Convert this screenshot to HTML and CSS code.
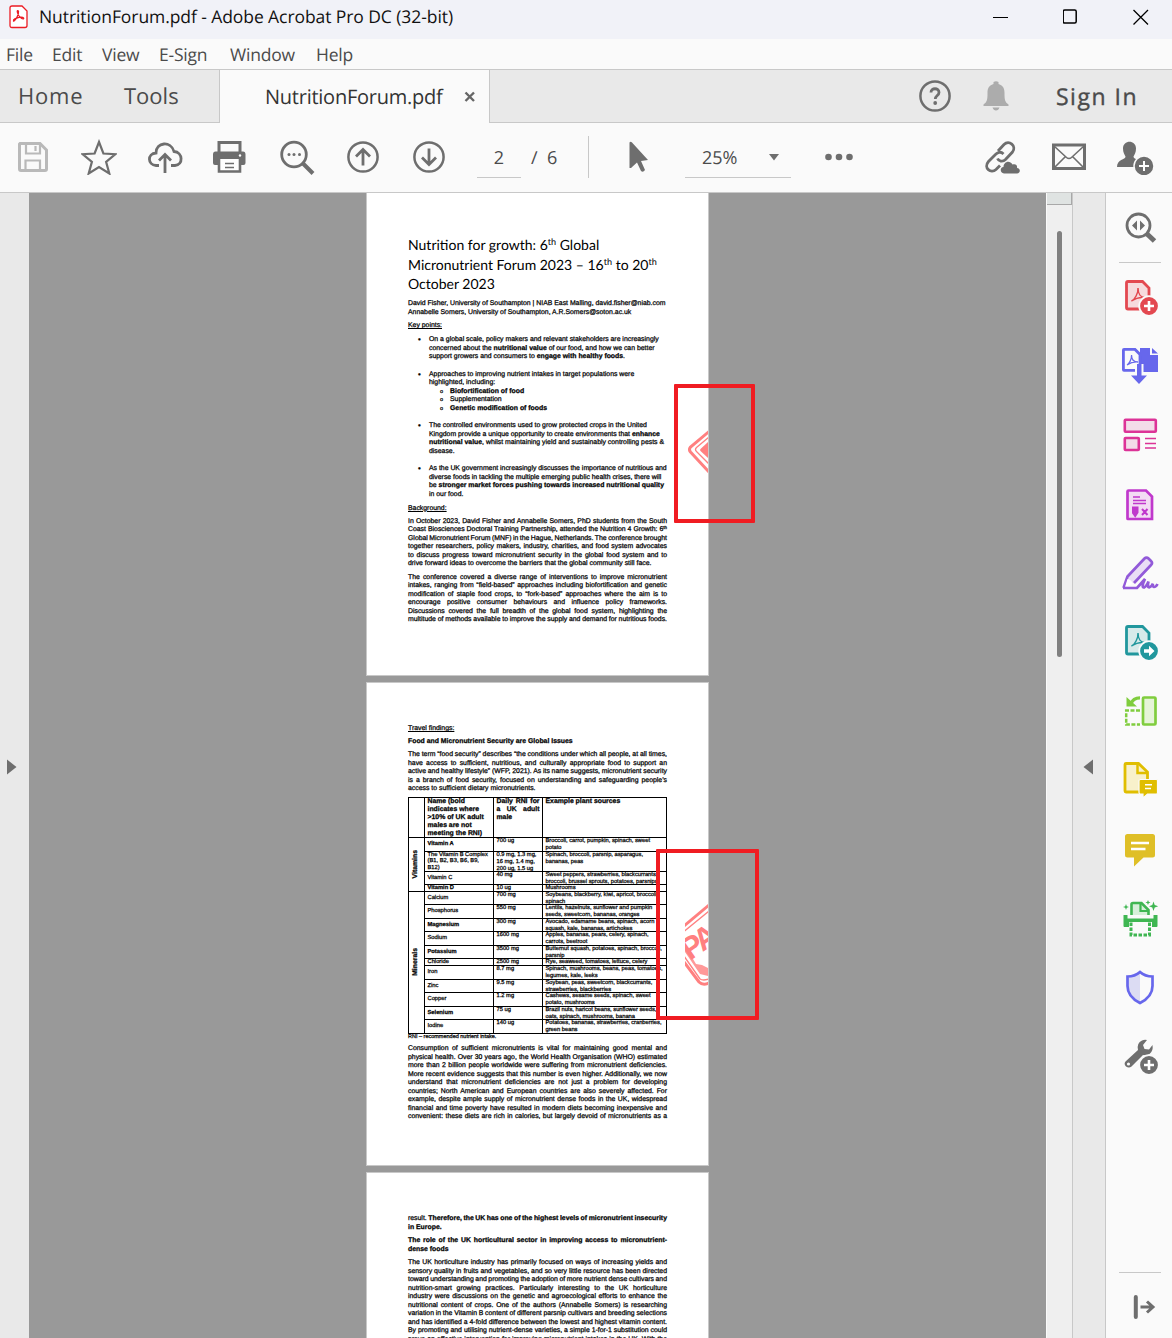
FILE: index.html
```html
<!DOCTYPE html>
<html lang="en">
<head>
    <meta charset="UTF-8">
    <meta name="viewport" content="width=device-width, initial-scale=1.0">
    <title>NutritionForum.pdf - Adobe Acrobat Pro DC (32-bit)</title>
    <link rel="stylesheet" href="styles.css">
</head>
<body>
    <!-- Title bar -->
    <header class="titlebar">
        <svg class="app-icon" width="20" height="24" viewBox="0 0 20 24"><path d="M3 1h10l5 5v14.500q0 2-2 2H3q-2 0-2-2V3q0-2 2-2z" fill="#fff" stroke="#ec1c24" stroke-width="1.300"/><path d="M4.500 16c2 0 5.500-7 5-9.500-.4-1.500-1.500-.8-1.200.5.7 4 4.500 7.500 6.200 6.800 1-1-1.500-2.300-5-1.300-2.500.6-5.500 2-5 3.500z" fill="none" stroke="#ec1c24" stroke-width="1.300"/></svg>
        <span class="title-text">NutritionForum.pdf - Adobe Acrobat Pro DC (32-bit)</span>
        <div class="window-buttons">
            <svg width="16" height="16" viewBox="0 0 16 16"><path d="M0 8.500h15" stroke="#000"/></svg>
            <svg width="16" height="16" viewBox="0 0 16 16"><rect x=".2" y="1" width="13" height="13" rx="1.500" fill="none" stroke="#000" stroke-width="1.500"/></svg>
            <svg width="16" height="16" viewBox="0 0 16 16"><path d="M.5 1l14.500 14.500M15 1L.5 15.500" stroke="#000" stroke-width="1.300"/></svg>
        </div>
    </header>

    <nav class="menubar">
        <span class="m-file">File</span>
        <span class="m-edit">Edit</span>
        <span class="m-view">View</span>
        <span class="m-sign">E-Sign</span>
        <span class="m-window">Window</span>
        <span class="m-help">Help</span>
    </nav>

    <!-- Tabs -->
    <div class="tabs">
        <div class="tabs-left">
            <span class="tab-home">Home</span>
            <span class="tab-tools">Tools</span>
        </div>
        <div class="tab-active">
            <span class="tab-name">NutritionForum.pdf</span>
            <svg width="12" height="12" viewBox="0 0 12 12"><path d="M1.500 1.500l8.500 8.500M10 1.500L1.500 10" stroke="#666" stroke-width="2.400"/></svg>
        </div>
        <div class="tabs-right">
            <svg class="help" width="32" height="32" viewBox="0 0 32 32"><circle cx="16" cy="16" r="14.600" fill="none" stroke="#6e6e6e" stroke-width="2.500"/><path d="M12 12.500c0-5 8-5 8 0 0 3-3.700 3-3.700 6.500" fill="none" stroke="#6e6e6e" stroke-width="2.800"/><circle cx="16.200" cy="23" r="1.900" fill="#6e6e6e"/></svg>
            <svg class="bell" width="26" height="30" viewBox="0 0 26 30"><path d="M10.500 3V1q2.500-1.500 5 0v2c5 1.500 6 5 6 9 0 7 .5 9 4 11.500V25H.5v-1.500C4 21 4.500 19 4.500 12c0-4 1-7.500 6-9zM9.500 26.500h7q-1 3-3.500 3t-3.500-3z" fill="#acacac"/></svg>
            <span class="signin">Sign In</span>
        </div>
    </div>

    <!-- Toolbar -->
    <div class="toolbar">
        <div class="slot"><svg width="36" height="36" viewBox="0 0 36 36"><path d="M5 4.500h20l6.500 6.500v19q0 1.500-1.500 1.500H6q-1.500 0-1.500-1.500V5z" fill="none" stroke="#b9b9b9" stroke-width="3"/><path d="M11 4v10.500h14V4M20.500 7v5M10.500 31V21.500h14.500V31" fill="none" stroke="#b9b9b9" stroke-width="2.200"/></svg></div>
        <div class="slot"><svg width="36" height="36" viewBox="0 0 36 36"><path d="M18 3l4.400 11.500 12 .7-9.300 7.600 3.200 11.700L18 28 7.700 34.500l3.200-11.700L1.600 15.200l12-.7z" fill="none" stroke="#6e6e6e" stroke-width="2.200"/></svg></div>
        <div class="slot"><svg width="36" height="36" viewBox="0 0 36 36"><path d="M12 26.500H9C.5 26 0 14.500 9 14 9 3 24 1.500 27 12.500c9 .5 9.500 13.500 1 14h-4" fill="none" stroke="#6e6e6e" stroke-width="2.800"/><path d="M18 34V16M12 21.500l6-6 6 6" fill="none" stroke="#6e6e6e" stroke-width="2.800"/></svg></div>
        <div class="slot print"><svg width="36" height="36" viewBox="0 0 36 36"><path d="M8 13V3.500h21V13" fill="none" stroke="#6e6e6e" stroke-width="3"/><path d="M4.500 12.500h27.500q2.500 0 2.500 3v8.500q0 2-2 2h-4V20H8v6H4q-2 0-2-2v-8.500q0-3 2.500-3z" fill="#6e6e6e"/><circle cx="29" cy="16.500" r="1.200" fill="#fff"/><path d="M8 20v12.500h21V20" fill="#fff" stroke="#6e6e6e" stroke-width="2.600"/><path d="M14 24.500h9M14 28.500h9" stroke="#6e6e6e" stroke-width="1.500"/></svg></div>
        <div class="slot"><svg width="36" height="36" viewBox="0 0 36 36"><circle cx="15" cy="15.500" r="12.300" fill="none" stroke="#6e6e6e" stroke-width="2.800"/><path d="M24 24.500l10 10" stroke="#6e6e6e" stroke-width="4"/><g fill="#6e6e6e"><circle cx="10" cy="15.500" r="1.500"/><circle cx="15" cy="15.500" r="1.500"/><circle cx="20.500" cy="15.500" r="1.500"/></g></svg></div>
        <div class="slot"><svg width="36" height="36" viewBox="0 0 36 36"><circle cx="18" cy="18" r="14.600" fill="none" stroke="#6e6e6e" stroke-width="2.500"/><path d="M18 26.500V11M11 17.500l7-7 7 7" fill="none" stroke="#6e6e6e" stroke-width="2.800"/></svg></div>
        <div class="slot"><svg width="36" height="36" viewBox="0 0 36 36"><circle cx="18" cy="18" r="14.600" fill="none" stroke="#6e6e6e" stroke-width="2.500"/><path d="M18 9.500V25M11 18.500l7 7 7-7" fill="none" stroke="#6e6e6e" stroke-width="2.800"/></svg></div>
        <div class="page-input">2</div>
        <div class="page-total">/&nbsp; 6</div>
        <div class="divider"></div>
        <svg class="cursor" width="20" height="32" viewBox="0 0 20 32"><path d="M.5 1.500q1-1.500 2.500 0L19 19l-7 1 4 9q-2 3-4 1l-4-8.500L2 27H.5z" fill="#6e6e6e"/></svg>
        <div class="zoom-box"><span>25%</span><svg width="10" height="7" viewBox="0 0 10 7"><path d="M0 0h10L5 6.500z" fill="#6e6e6e"/></svg></div>
        <svg class="dots" width="28" height="8" viewBox="0 0 28 8"><g fill="#6e6e6e"><circle cx="3.500" cy="4" r="3.300"/><circle cx="14" cy="4" r="3.300"/><circle cx="24.500" cy="4" r="3.300"/></g></svg>
        <div class="toolbar-right">
            <svg class="share-link" width="36" height="36" viewBox="0 0 36 36"><g fill="none" stroke="#6e6e6e" stroke-width="2.800"><path d="M14 12l6-6.500c5-5 13 1.500 8.500 7.500l-7 7.500c-3 3-7 1.500-8-1"/><path d="M19.500 15c-3-3-6-1.500-7.500 0L4.500 22.500C-1 29 7 35 12 30.500l4-4"/></g><path d="M20 34.500c-4-.5-4.500-6-.5-6.500 0-5 6-7.500 9-2.500 3.500-1 5 1 4.500 3.500 4 .5 3.500 5.500 0 5.500z" fill="#6e6e6e"/></svg>
            <svg width="36" height="36" viewBox="0 0 36 36"><rect x="2.500" y="6" width="31" height="23.500" fill="none" stroke="#6e6e6e" stroke-width="3"/><path d="M3 7l12.500 11.500q2.500 2 5 0L33 7M3 29l11-11M33 29L22 18" fill="none" stroke="#6e6e6e" stroke-width="1.600"/></svg>
            <svg width="38" height="36" viewBox="0 0 38 36"><path d="M7 9.500c0-9 13-9 13 0 0 4-1.500 6-2.500 8 0 3 6 3 6.500 5l-5 5.500H1c0-8 8.500-7 8.500-10.500C8.500 15.500 7 13.500 7 9.500z" fill="#6e6e6e"/><circle cx="28" cy="27" r="10" fill="#6e6e6e" stroke="#fafafa" stroke-width="1.500"/><path d="M28 22v10M23 27h10" stroke="#fff" stroke-width="2"/></svg>
        </div>
    </div>

    <main class="workspace">
        <div class="left-rail"><svg width="10" height="16" viewBox="0 0 10 16"><path d="M0 .5v15L9.500 8z" fill="#6e6e6e"/></svg></div>

        <div class="viewer">
            <!-- Page 1 -->
            <section class="page first">
                <h1>Nutrition for growth: 6<sup>th</sup> Global<br>Micronutrient Forum 2023 – 16<sup>th</sup> to 20<sup>th</sup><br>October 2023</h1>
                <p class="authors">David Fisher, University of Southampton | NIAB East Malling, david.fisher@niab.com<br>Annabelle Somers, University of Southampton, A.R.Somers@soton.ac.uk</p>
                <h3 class="key">Key points:</h3>
                <ul>
                    <li>On a global scale, policy makers and relevant stakeholders are increasingly<br>concerned about the <b>nutritional value</b> of our food, and how we can better<br>support growers and consumers to <b>engage with healthy foods</b>.</li>
                    <li>Approaches to improving nutrient intakes in target populations were<br>highlighted, including:
                        <ul class="sub">
                            <li><b>Biofortification of food</b></li>
                            <li>Supplementation</li>
                            <li><b>Genetic modification of foods</b></li>
                        </ul>
                    </li>
                    <li>The controlled environments used to grow protected crops in the United<br>Kingdom provide a unique opportunity to create environments that <b>enhance<br>nutritional value</b>, whilst maintaining yield and sustainably controlling pests &amp;<br>disease.</li>
                    <li>As the UK government increasingly discusses the importance of nutritious and<br>diverse foods in tackling the multiple emerging public health crises, there will<br>be <b>stronger market forces pushing towards increased nutritional quality</b><br>in our food.</li>
                </ul>
                <h3 class="background">Background:</h3>
                <p class="just">In October 2023, David Fisher and Annabelle Somers, PhD students from the South<br>Coast Biosciences Doctoral Training Partnership, attended the Nutrition 4 Growth: 6<sup>th</sup><br>Global Micronutrient Forum (MNF) in the Hague, Netherlands. The conference brought<br>together researchers, policy makers, industry, charities, and food system advocates<br>to discuss progress toward micronutrient security in the global food system and to<span class="last">drive forward ideas to overcome the barriers that the global community still face.</span></p>
                <p class="just">The conference covered a diverse range of interventions to improve micronutrient<br>intakes, ranging from “field-based” approaches including biofortification and genetic<br>modification of staple food crops, to “fork-based” approaches where the aim is to<br>encourage positive consumer behaviours and influence policy frameworks.<br>Discussions covered the full breadth of the global food system, highlighting the<br>multitude of methods available to improve the supply and demand for nutritious foods.</p>
            </section>

            <!-- Page 2 -->
            <section class="page second">
                <h3>Travel findings:</h3>
                <h4>Food and Micronutrient Security are Global Issues</h4>
                <p class="just">The term “food security” describes “the conditions under which all people, at all times,<br>have access to sufficient, nutritious, and culturally appropriate food to support an<br>active and healthy lifestyle” (WFP, 2021). As its name suggests, micronutrient security<br>is a branch of food security, focused on understanding and safeguarding people’s<span class="last">access to sufficient dietary micronutrients.</span></p>

                <div class="rni">
                    <div class="head"></div>
                    <div class="head">Name (bold<br>indicates where<br>&gt;10% of UK adult<br>males are not<br>meeting the RNI)</div>
                    <div class="head"><span class="spread">Daily RNI for<br>a UK adult</span>male</div>
                    <div class="head">Example plant sources</div>

                    <div class="group vitamins"><span>Vitamins</span></div>
                    <div class="name"><b>Vitamin A</b></div><div>700 ug</div><div>Broccoli, carrot, pumpkin, spinach, sweet<br>potato</div>
                    <div class="name">The Vitamin B Complex<br>(B1, B2, B3, B6, B9,<br>B12)</div><div>0.9 mg, 1.3 mg,<br>16 mg, 1.4 mg,<br>200 ug, 1.5 ug</div><div>Spinach, broccoli, parsnip, asparagus,<br>bananas, peas</div>
                    <div class="name">Vitamin C</div><div>40 mg</div><div>Sweet peppers, strawberries, blackcurrants,<br>broccoli, brussel sprouts, potatoes, parsnips</div>
                    <div class="name"><b>Vitamin D</b></div><div>10 ug</div><div>Mushrooms</div>

                    <div class="group minerals"><span>Minerals</span></div>
                    <div class="name">Calcium</div><div>700 mg</div><div>Soybeans, blackberry, kiwi, apricot, broccoli,<br>spinach</div>
                    <div class="name">Phosphorus</div><div>550 mg</div><div>Lentils, hazelnuts, sunflower and pumpkin<br>seeds, sweetcorn, bananas, oranges</div>
                    <div class="name"><b>Magnesium</b></div><div>300 mg</div><div>Avocado, edamame beans, spinach, acorn<br>squash, kale, bananas, artichokes</div>
                    <div class="name">Sodium</div><div>1600 mg</div><div>Apples, bananas, pears, celery, spinach,<br>carrots, beetroot</div>
                    <div class="name"><b>Potassium</b></div><div>3500 mg</div><div>Butternut squash, potatoes, spinach, broccoli,<br>parsnip</div>
                    <div class="name">Chloride</div><div>2500 mg</div><div>Rye, seaweed, tomatoes, lettuce, celery</div>
                    <div class="name">Iron</div><div>8.7 mg</div><div>Spinach, mushrooms, beans, peas, tomatoes,<br>legumes, kale, leeks</div>
                    <div class="name">Zinc</div><div>9.5 mg</div><div>Soybean, peas, sweetcorn, blackcurrants,<br>strawberries, blackberries</div>
                    <div class="name">Copper</div><div>1.2 mg</div><div>Cashews, sesame seeds, spinach, sweet<br>potato, mushrooms</div>
                    <div class="name"><b>Selenium</b></div><div>75 ug</div><div>Brazil nuts, haricot beans, sunflower seeds,<br>oats, spinach, mushrooms, banana</div>
                    <div class="name">Iodine</div><div>140 ug</div><div>Potatoes, bananas, strawberries, cranberries,<br>green beans</div>
                </div>
                <p class="note">RNI – recommended nutrient intake.</p>

                <p class="just">Consumption of sufficient micronutrients is vital for maintaining good mental and<br>physical health. Over 30 years ago, the World Health Organisation (WHO) estimated<br>more than 2 billion people worldwide were suffering from micronutrient deficiencies.<br>More recent evidence suggests that this number is even higher. Additionally, we now<br>understand that micronutrient deficiencies are not just a problem for developing<br>countries; North American and European countries are also severely affected. For<br>example, despite ample supply of micronutrient dense foods in the UK, widespread<br>financial and time poverty have resulted in modern diets becoming inexpensive and<br>convenient: these diets are rich in calories, but largely devoid of micronutrients as a</p>
            </section>

            <!-- Page 3 -->
            <section class="page third">
                <p class="just">result. <b>Therefore, the UK has one of the highest levels of micronutrient insecurity</b><span class="last"><b>in Europe.</b></span></p>
                <p class="just"><b>The role of the UK horticultural sector in improving access to micronutrient-</b><span class="last"><b>dense foods</b></span></p>
                <p class="just">The UK horticulture industry has primarily focused on ways of increasing yields and<br>sensory quality in fruits and vegetables, and so very little resource has been directed<br>toward understanding and promoting the adoption of more nutrient dense cultivars and<br>nutrition-smart growing practices. Particularly interesting to the UK horticulture<br>industry were discussions on the genetic and agroecological efforts to enhance the<br>nutritional content of crops. One of the authors (Annabelle Somers) is researching<br>variation in the Vitamin B content of different parsnip cultivars and breeding selections<br>and has identified a 4-fold difference between the lowest and highest vitamin content.<br>By promoting and utilising nutrient-dense varieties, a simple 1-for-1 substitution could<br>prove an effective intervention for improving micronutrient intakes in the UK. With the</p>
            </section>

            <!-- Stamps cut off by the page edge, and the boxes marking them -->
            <svg class="stamp stamp-one" width="20" height="44" viewBox="0 0 20 44"><g fill="none" stroke="#ff8080"><path d="M21 1.500L2.500 17q-2 2.500 0 5L21 42" stroke-width="3"/><path d="M21 7L8.500 17.500q-2 2 0 4L21 34" stroke-width="1.300"/></g><path d="M20 12l-7.500 7q-1 1 0 2L20 28z" fill="#ff8080"/></svg>
            <svg class="stamp stamp-two" width="23" height="84" viewBox="0 0 23 84"><g fill="none" stroke="#ff8080"><path d="M-1 24L24 3" stroke-width="3"/><path d="M-1 29.500L24 9M-1 54l16 23q3 2 9 0" stroke-width="1.400"/><path d="M-1 60l15 20q4 4 10 1" stroke-width="3"/></g><path d="M0 45l3 6 5 6 3 5 6 1 6 3v8l-8-2L0 50z" fill="#ff8080" opacity=".8"/><text x="5" y="59" transform="rotate(-35 5 59)" class="stamp-text">PA</text></svg>
            <div class="mark mark-one"></div>
            <div class="mark mark-two"></div>
        </div>

        <div class="scroll-column"><div class="split"></div><div class="thumb"></div></div>
        <div class="right-rail"><svg width="10" height="16" viewBox="0 0 10 16"><path d="M10 .5v15L.5 8z" fill="#6e6e6e"/></svg></div>

        <aside class="tools">
            <div class="tool search"><svg width="40" height="40" viewBox="0 0 40 40"><circle cx="18.500" cy="17.500" r="11.500" fill="none" stroke="#6e6e6e" stroke-width="2.800"/><path d="M26.500 25.500l8 7.500" stroke="#6e6e6e" stroke-width="5"/><path d="M12 17.500l5-5v10zM25 17.500l-5-5v10z" fill="#6e6e6e"/></svg></div>
            <div class="tool create"><svg width="40" height="40" viewBox="0 0 40 40"><path d="M8 4.500h14.500L29 11v21H8q-1.500 0-1.500-1.500V6Q6.500 4.500 8 4.500z" fill="#f6dadd" stroke="#e34850" stroke-width="2.800"/><path d="M11.500 24c3-1 7-8 6.500-13 0 6 3 9.500 7 9.500-5-.5-10 1-13.500 3.500z" fill="none" stroke="#e34850" stroke-width="1.500"/><circle cx="29" cy="29" r="9.800" fill="#e34850" stroke="#fafafa" stroke-width="1.800"/><path d="M29 24v10M24 29h10" stroke="#fff" stroke-width="2.600"/></svg></div>
            <div class="tool"><svg width="40" height="40" viewBox="0 0 40 40"><path d="M20 2h10v7h8v17H20z" fill="#6767ec"/><path d="M32 2l6 5.500h-6z" fill="#6767ec"/><path d="M4 3.400h11l5 5v16H4q-.6 0-.6-.6V4q0-.6.6-.6z" fill="#fafafa" stroke="#6767ec" stroke-width="2.800"/><path d="M7 19c2-1 5-6 4.500-10 0 5 3 7 6.500 7-4-.5-8 1-11 3z" fill="none" stroke="#6767ec" stroke-width="1.300"/><path d="M15 18h8.500v10h6L19 39 7.500 28H15z" fill="#fafafa"/><path d="M17 18h4.500v11.500H27l-8 8.500-8-8.500h6z" fill="#6767ec"/></svg></div>
            <div class="tool"><svg width="40" height="40" viewBox="0 0 40 40"><g fill="#f3dce9" stroke="#dc3397" stroke-width="2.600"><rect x="4.800" y="4.800" width="31" height="12" rx=".8"/><rect x="4.800" y="23" width="14" height="12" rx=".8"/></g><path d="M25 23.500h11M25 28.500h11M25 33h11" stroke="#dc3397" stroke-width="1.500"/></svg></div>
            <div class="tool"><svg width="40" height="40" viewBox="0 0 40 40"><path d="M8.500 6.500H26l6 6V35H8q-.5 0-.5-.5V7.500q0-1 1-1z" fill="#f3dcf4" stroke="#c038cc" stroke-width="2.700"/><path d="M13 13h7M13 16.500h13M13 19.500h13" stroke="#c038cc" stroke-width="1.500"/><path d="M13 23.500h4.500v5L15.200 32 13 29zM22 25l5.500 6M27.500 25L22 31" stroke="#c038cc" stroke-width="2" fill="#c038cc"/></svg></div>
            <div class="tool"><svg width="40" height="40" viewBox="0 0 40 40"><path d="M3.500 35l4-11.500L24.500 5.500q2-2 4 0l2.500 2.500q2 2 0 4L14 30" fill="#e9def5" stroke="#925ad9" stroke-width="2.700"/><path d="M5 34l2.500-8q4.500 1 5.500 5z" fill="#fff"/><path d="M3 35h14L25 26q-4 8-1 8.500 2.500-1 4.500-6-1.500 6 .5 6 3-1 4-4-1 3 1 3.500 2 0 3.500-3" fill="none" stroke="#925ad9" stroke-width="2.700"/></svg></div>
            <div class="tool"><svg width="40" height="40" viewBox="0 0 40 40"><path d="M8 4.500h14.500L29 11v21H8q-1.500 0-1.500-1.500V6Q6.500 4.500 8 4.500z" fill="#d7eaea" stroke="#21979d" stroke-width="2.800"/><path d="M11.500 24c3-1 7-8 6.500-13 0 6 3 9.500 7 9.500-5-.5-10 1-13.500 3.500z" fill="none" stroke="#21979d" stroke-width="1.500"/><circle cx="29" cy="29" r="9.800" fill="#21979d" stroke="#fafafa" stroke-width="1.800"/><path d="M24 27.300h5v-3.500l5.500 5.200-5.500 5.200v-3.500h-5z" fill="#fff"/></svg></div>
            <div class="tool"><svg width="40" height="40" viewBox="0 0 40 40"><rect x="23" y="6.500" width="12.500" height="27" rx="1" fill="#e6f4d8" stroke="#80cd3e" stroke-width="2.700"/><path d="M20 6.800q-7 0-9 6" fill="none" stroke="#80cd3e" stroke-width="3.200"/><path d="M6.500 6v9.500H17z" fill="#80cd3e"/><path d="M20 19.500H6.200v14H20" fill="none" stroke="#80cd3e" stroke-width="2.500" stroke-dasharray="4 1.500"/></svg></div>
            <div class="tool"><svg width="40" height="40" viewBox="0 0 40 40"><path d="M6 3.500h12.500L27.500 12v20H6q-1 0-1-1V4.500q0-1 1-1z" fill="#f8f1cb" stroke="#e0be00" stroke-width="2.800"/><path d="M17.500 3v10H28" fill="none" stroke="#e0be00" stroke-width="2.500"/><path d="M20.500 19.500h16q1 0 1 1v12q0 1.500-1 1.500H27.500L23 38v-4h-2.500q-1.500 0-1.500-1.500v-12q0-1 1.500-1z" fill="#e0be00" stroke="#fafafa" stroke-width="1.200"/><path d="M25 24.800h7M25 28.500h6" stroke="#fff" stroke-width="1.600"/></svg></div>
            <div class="tool"><svg width="40" height="40" viewBox="0 0 40 40"><path d="M7.500 5h25q2.500 0 2.500 2.500v18.500q0 2.500-2.500 2.500h-9L14 37.500v-9H7.500Q5 28.500 5 26V7.500Q5 5 7.500 5z" fill="#dfbf27"/><path d="M11 14h18M11 20h14.500" stroke="#fff" stroke-width="2.500"/></svg></div>
            <div class="tool"><svg width="40" height="40" viewBox="0 0 40 40"><path d="M11.500 17V6.500q0-1.500 1.500-1.500h8.500l7 7v5" fill="#d7efda" stroke="#3fb652" stroke-width="2.600"/><path d="M20.500 4.500V13h8" fill="none" stroke="#3fb652" stroke-width="2.200"/><path d="M3.500 17h4v3.500h26V17h4v11q0 1-1 1h-4.500v-5h-23v5H4.500q-1 0-1-1z" fill="#3fb652"/><path d="M11 24.500v12.500h18.500V24.500" fill="none" stroke="#3fb652" stroke-width="3" stroke-dasharray="3.500 1.500"/><path d="M33.500 3.500l1.200 3.500 3.500 1.300-3.500 1.200-1.200 3.500-1.200-3.500L29 8.300 32.300 7zM28 2l.7 1.800 1.800.7-1.800.7L28 7l-.7-1.800-1.800-.7 1.800-.7zM6 6l.8 2.200 2.200.8-2.200.8L6 12l-.8-2.200L3 9l2.200-.8z" fill="#3fb652"/></svg></div>
            <div class="tool"><svg width="40" height="40" viewBox="0 0 40 40"><path d="M20 5.500v30C12 31 7.500 26 7.500 18V9.500Q15 9.500 20 5.500z" fill="#dcdcf3"/><path d="M20 5q5 4.500 12.500 4.500V19c0 8-4.500 13-12.500 17C12 32 7.500 27 7.500 19V9.500Q15 9.500 20 5z" fill="none" stroke="#6767ec" stroke-width="2.700"/></svg></div>
            <div class="tool"><svg width="40" height="40" viewBox="0 0 40 40"><path d="M5.500 25.500L18 14q-1.500-7 4-9.500 2.500-1.200 5-.5l-4 5 1.500 4 4.500.5 3.500-4.500q1 6-3 9-3 2-6.500 1L11.500 30.500q-2.500 2-5.500 0-2.500-2.500-.5-5z" fill="#6e6e6e"/><circle cx="8.500" cy="28" r="1.600" fill="#fafafa"/><circle cx="29" cy="29" r="9.800" fill="#6e6e6e" stroke="#fafafa" stroke-width="1.800"/><path d="M29 24v10M24 29h10" stroke="#fff" stroke-width="2.600"/></svg></div>
            <div class="tool collapse"><svg width="40" height="40" viewBox="0 0 40 40"><path d="M15.800 10v20" stroke="#6e6e6e" stroke-width="4" stroke-linecap="round"/><path d="M20.500 20H32M27 14.500l6 5.500-6 5.500" fill="none" stroke="#6e6e6e" stroke-width="3"/></svg></div>
        </aside>
    </main>
</body>
</html>
```
FILE: styles.css
```css
* {
    box-sizing: border-box;
}

body {
    margin: 0;
    height: 1338px;
    overflow: hidden;
    display: flex;
    flex-direction: column;
    font-family: "Open Sans", "Noto Sans", sans-serif;
    color: #4b4b4b;
    background-color: #fafafa;
    text-rendering: geometricPrecision;
}

svg {
    display: block;
    flex: none;
}

/* Title bar and menu */
.titlebar {
    display: flex;
    align-items: center;
    height: 39px;
    flex: none;
    padding: 0 23px 6px 9px;
    background-color: #f1f2f8;
    color: #111;
    font-size: 17.5px;
}

.app-icon {
    margin-right: 10px;
}

.title-text {
    letter-spacing: -0.08px;
    white-space: nowrap;
}

.window-buttons {
    display: flex;
    gap: 54px;
    margin-left: auto;
}

.menubar {
    display: flex;
    align-items: center;
    height: 31px;
    flex: none;
    padding: 2px 0 0 6px;
    border-bottom: 1px solid #c8c8c8;
    font-size: 17.5px;
    letter-spacing: -0.2px;
}

.menubar span {
    flex: none;
}

.m-file { width: 46px; }
.m-edit { width: 50px; }
.m-view { width: 57px; }
.m-sign { width: 71px; }
.m-window { width: 86px; }

/* Tabs */
.tabs {
    display: flex;
    height: 53px;
    flex: none;
    background-color: #e9e9e9;
}

.tabs-left {
    display: flex;
    align-items: center;
    width: 219px;
    padding-left: 18px;
    border-bottom: 1px solid #c8c8c8;
    font-size: 22px;
}

.tab-home {
    width: 106px;
    letter-spacing: 0.8px;
}

.tab-active {
    display: flex;
    align-items: center;
    width: 271px;
    padding: 0 13px 0 45px;
    justify-content: space-between;
    background-color: #fafafa;
    border-left: 1px solid #c8c8c8;
    border-right: 1px solid #c8c8c8;
    color: #333;
    font-size: 20px;
    letter-spacing: -0.25px;
}

.tabs-right {
    display: flex;
    align-items: center;
    justify-content: flex-end;
    flex: 1;
    padding-right: 34px;
    border-bottom: 1px solid #c8c8c8;
    font-size: 23px;
}

.help {
    margin-right: 32px;
}

.bell {
    margin-right: 47px;
}

.signin {
    letter-spacing: 1.5px;
    -webkit-text-stroke: 0.4px #4b4b4b;
}

/* Toolbar */
.toolbar {
    display: flex;
    align-items: center;
    height: 70px;
    flex: none;
    padding-bottom: 2px;
    border-bottom: 1px solid #c8c8c8;
    font-size: 18px;
}

.slot {
    display: flex;
    justify-content: center;
    width: 66px;
    flex: none;
}

.print {
    padding-right: 4px;
}

.page-input {
    width: 44px;
    height: 42px;
    margin-left: 15px;
    border-bottom: 1px solid #c8c8c8;
    line-height: 44px;
    text-align: center;
}

.page-total {
    width: 57px;
    margin-left: 10px;
    padding-top: 2px;
}

.divider {
    width: 1px;
    height: 42px;
    background-color: #c8c8c8;
}

.cursor {
    margin-left: 40px;
}

.zoom-box {
    display: flex;
    align-items: center;
    justify-content: space-between;
    width: 106px;
    height: 42px;
    margin-left: 36px;
    padding: 3px 12px 0 17px;
    border-bottom: 1px solid #c8c8c8;
}

.dots {
    margin-left: 34px;
}

.toolbar-right {
    display: flex;
    gap: 29px;
    margin-left: auto;
    padding-right: 18px;
}

.share-link {
    margin-right: 2px;
}

/* Workspace */
.workspace {
    display: flex;
    flex: 1;
    min-height: 0;
}

.left-rail {
    width: 29px;
    padding: 566px 0 0 7px;
    background-color: #e9e9e9;
}

.viewer {
    position: relative;
    width: 1017px;
    padding-left: 337px;
    overflow: hidden;
    background-color: #999;
}

.page {
    width: 343px;
    height: 484px;
    margin-bottom: 6px;
    padding: 0 41px;
    border: 1px solid #c8c8c8;
    overflow: hidden;
    background-color: #fff;
    color: #000;
    font-family: "Liberation Sans", Arial, sans-serif;
    font-size: 6.88px;
    line-height: 8.5px;
    white-space: nowrap;
    -webkit-text-stroke: 0.25px #000;
}

.first {
    height: 483px;
    padding-top: 42px;
    border-top: 0;
}

.page h1 {
    margin: 0;
    font-family: Lato, sans-serif;
    font-size: 14px;
    font-weight: 400;
    line-height: 19.6px;
    -webkit-text-stroke: 0;
}

.page sup {
    font-size: 65%;
    line-height: 0;
    vertical-align: 0.55em;
}

.page p {
    margin: 0 0 5px;
}

.page h3 {
    margin: 0 0 4.5px;
    font-size: inherit;
    font-weight: 400;
    text-decoration: underline;
}

.page h4 {
    margin: 0 0 4.5px;
    font-size: inherit;
}

.page .authors {
    margin: 6.6px 0 4px;
    line-height: 8.9px;
}

/* Tight word spacing lets the fullest lines fit; justify widens the rest */
.just {
    width: 259px;
    text-align: justify;
    text-align-last: justify;
    word-spacing: -0.5px;
}

.last {
    display: block;
    text-align-last: left;
    word-spacing: 0;
}

.page ul {
    margin: 0;
    padding-left: 21px;
    line-height: 8.57px;
    list-style: none;
}

.page li {
    margin-bottom: 8.75px;
}

.page li::before {
    content: "•";
    float: left;
    margin-left: -11px;
    font-size: 8px;
}

.page .sub {
    padding-left: 21px;
}

.page .sub li {
    margin: 0;
}

.page .sub li::before {
    content: "o";
    font-size: 5.5px;
    margin-left: -10px;
}

.page .key {
    margin-bottom: 5.6px;
}

.page .background {
    margin-top: -3.6px;
}

.second {
    padding-top: 42.4px;
}

.rni {
    display: grid;
    grid-template-columns: 16px 69px 49px 124px;
    grid-template-rows: 40px 14px 20px 13px 7px 13px 14px 13px 14px 13px 7px 14px 13px 14px 13px 14px;
    width: 259px;
    margin-top: -2.4px;
    border-top: 1px solid #000;
    border-left: 1px solid #000;
    font-size: 5.75px;
    line-height: 6.7px;
}

.rni > div {
    padding: 0.7px 0 0 2.5px;
    border-right: 1px solid #000;
    border-bottom: 1px solid #000;
}

.rni .head {
    font-size: 6.86px;
    font-weight: 700;
    line-height: 8px;
}

.spread {
    display: block;
    width: 43px;
    text-align-last: justify;
}

.rni .name {
    display: flex;
    align-items: center;
    padding-top: 1.5px;
}

.rni .group {
    display: flex;
    align-items: center;
    justify-content: center;
    padding: 0;
    font-size: 6.86px;
    font-weight: 700;
}

.group span {
    writing-mode: vertical-rl;
    transform: rotate(180deg);
}

.vitamins {
    grid-row: 2 / span 4;
}

.minerals {
    grid-row: 6 / span 11;
}

.page .note {
    margin: 0 0 4.8px;
    font-size: 5.5px;
    line-height: 7px;
}

.third {
    padding-top: 42px;
}

/* Stamps and markup boxes lie over the pages */
.stamp {
    position: absolute;
    overflow: hidden;
}

.stamp-one {
    left: 659px;
    top: 237px;
}

.stamp-two {
    left: 656px;
    top: 709px;
}

.stamp-text {
    font: 700 31px "Liberation Sans Narrow", "Liberation Sans", Arial, sans-serif;
    letter-spacing: -3px;
    fill: #ff8080;
}

.mark {
    position: absolute;
    border: 4px solid #f01c22;
    border-radius: 1px;
}

.mark-one {
    left: 645px;
    top: 191px;
    width: 81px;
    height: 139px;
}

.mark-two {
    left: 627px;
    top: 656px;
    width: 103px;
    height: 171px;
}

/* Scroll bar and tool pane */
.scroll-column {
    width: 26px;
    border-left: 1px solid #fafafa;
    background-color: #efefef;
}

.split {
    height: 12px;
    border-right: 1px solid #a8a8a8;
    border-bottom: 1px solid #a8a8a8;
    background-color: #dfe3e2;
}

.thumb {
    width: 5px;
    height: 426px;
    margin: 26px 0 0 10px;
    border-radius: 3px;
    background-color: #808080;
}

.right-rail {
    width: 34px;
    padding: 566px 0 0 10px;
    border-left: 1px solid #c8c8c8;
    border-right: 1px solid #c8c8c8;
    background-color: #e9e9e9;
}

.tools {
    display: flex;
    flex-direction: column;
    align-items: center;
    width: 66px;
    padding-left: 2px;
    background-color: #fafafa;
}

.tool {
    display: flex;
    align-items: center;
    justify-content: center;
    width: 42px;
    height: 69px;
    flex: none;
}

.search {
    height: 70px;
    border-bottom: 1px solid #c8c8c8;
}

.create {
    margin-top: -1px;
}

.collapse {
    margin-top: auto;
    height: 66px;
    padding-top: 2px;
    border-top: 1px solid #c8c8c8;
}
```
